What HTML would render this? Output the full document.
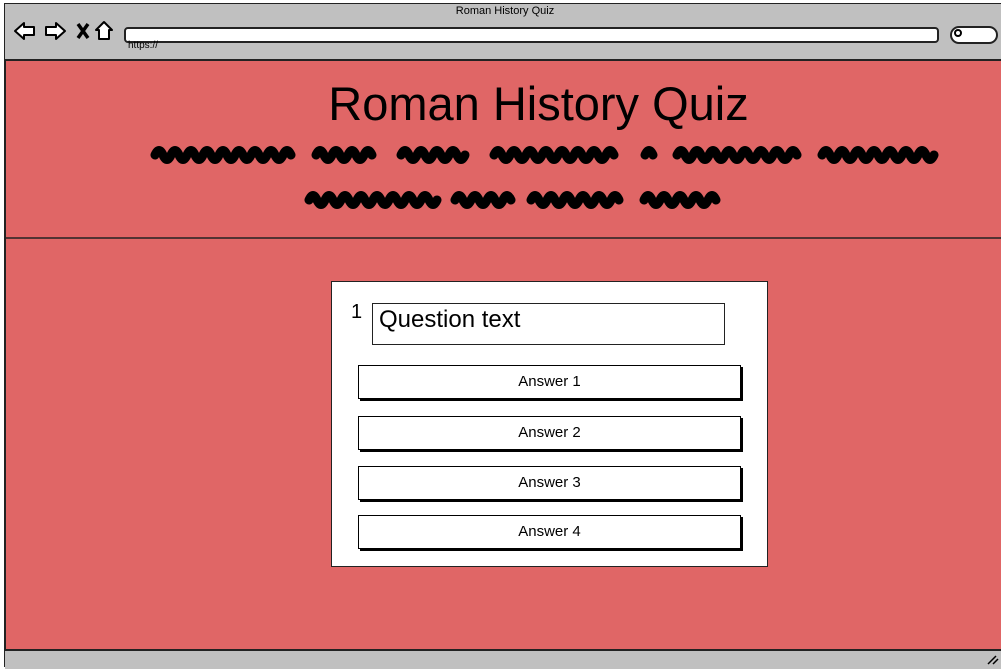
<!DOCTYPE html>
<html><head><style>
body{margin:0;width:1001px;height:669px;overflow:hidden;background:#fff;font-family:"Liberation Sans",sans-serif;position:relative}
.a{position:absolute}
.btn{position:absolute;left:358px;width:381px;height:32px;background:#fff;border:1.5px solid #000;box-shadow:2px 2px 0 #000;font-size:15px;text-align:center;line-height:32px}
</style></head><body>
<div class="a" style="left:4px;top:3px;width:1000px;height:664px;background:#e06666;border:2px solid #222;box-sizing:border-box"></div>
<div class="a" style="left:5px;top:4px;width:996px;height:55px;background:#c0c0c0;border-bottom:2px solid #222"></div>
<div class="a" style="left:5px;top:649px;width:996px;height:18px;background:#c0c0c0;border-top:2px solid #222"></div>
<div class="a" style="left:0;top:5px;width:1010px;text-align:center;font-size:11px">Roman History Quiz</div>
<div class="a" style="left:124px;top:27px;width:811px;height:12px;background:#fff;border:2px solid #222;border-radius:4px"></div>
<div class="a" style="left:128px;top:40px;font-size:10px">https://</div>
<div class="a" style="left:950px;top:26px;width:44px;height:14px;background:#fff;border:2px solid #222;border-radius:9px"></div>
<svg class="a" style="left:0;top:0" width="1001" height="669">
<g fill="#fff" stroke="#000" stroke-width="2" stroke-linejoin="round">
<path d="M15 31 L24 23 L24 27 L34 27 L34 35 L24 35 L24 39 Z"/>
<path d="M65 31 L56 23 L56 27 L46 27 L46 35 L56 35 L56 39 Z"/>
<path d="M96 30 L104 22 L112 30 L109 30 L109 39 L99 39 L99 30 Z"/>
<circle cx="958" cy="33" r="3" fill="none"/>
</g>
<path d="M78 24 L88 38 M88 24 L78 38" stroke="#000" stroke-width="3.5"/>
<path d="M988 664 L996 656 M993 664 L998 659" stroke="#000" stroke-width="1.5"/>
<line x1="5" y1="238" x2="1001" y2="238" stroke="#222" stroke-width="1.5"/>
<g fill="none" stroke="#000" stroke-width="9" stroke-linecap="round" stroke-linejoin="round">
<path d="M155 155 q4 -9 8 0 t8 0 t8 0 t8 0 t8 0 t8 0 t8 0 t8 0 t8 0 t8 0 t8 0 t8 0 t8 0 t8 0 t8 0 t8 0 t8 0"/>
<path d="M316 155 q4 -9 8 0 t8 0 t8 0 t8 0 t8 0 t8 0 t8 0"/>
<path d="M401 155 q4 -9 8 0 t8 0 t8 0 t8 0 t8 0 t8 0 t8 0 t8 0"/>
<path d="M494 155 q4 -9 8 0 t8 0 t8 0 t8 0 t8 0 t8 0 t8 0 t8 0 t8 0 t8 0 t8 0 t8 0 t8 0 t8 0 t8 0"/>
<path d="M645 155 q4 -9 8 0"/>
<path d="M677 155 q4 -9 8 0 t8 0 t8 0 t8 0 t8 0 t8 0 t8 0 t8 0 t8 0 t8 0 t8 0 t8 0 t8 0 t8 0 t8 0"/>
<path d="M822 155 q4 -9 8 0 t8 0 t8 0 t8 0 t8 0 t8 0 t8 0 t8 0 t8 0 t8 0 t8 0 t8 0 t8 0 t8 0"/>
<path d="M309 200 q4 -9 8 0 t8 0 t8 0 t8 0 t8 0 t8 0 t8 0 t8 0 t8 0 t8 0 t8 0 t8 0 t8 0 t8 0 t8 0 t8 0"/>
<path d="M455 200 q4 -9 8 0 t8 0 t8 0 t8 0 t8 0 t8 0 t8 0"/>
<path d="M531 200 q4 -9 8 0 t8 0 t8 0 t8 0 t8 0 t8 0 t8 0 t8 0 t8 0 t8 0 t8 0"/>
<path d="M644 200 q4 -9 8 0 t8 0 t8 0 t8 0 t8 0 t8 0 t8 0 t8 0 t8 0"/>
</g>
</svg>
<div class="a" style="left:0;top:76px;width:1077px;text-align:center;font-size:47px">Roman History Quiz</div>
<div class="a" style="left:331px;top:281px;width:437px;height:286px;background:#fff;border:1px solid #222;box-sizing:border-box"></div>
<div class="a" style="left:351px;top:301px;font-size:20px">1</div>
<div class="a" style="left:372px;top:303px;width:353px;height:42px;border:1.5px solid #222;box-sizing:border-box;font-size:24px;padding:2px 6px">Question text</div>
<div class="btn" style="top:365px">Answer 1</div>
<div class="btn" style="top:416px">Answer 2</div>
<div class="btn" style="top:466px">Answer 3</div>
<div class="btn" style="top:515px">Answer 4</div>
</body></html>
